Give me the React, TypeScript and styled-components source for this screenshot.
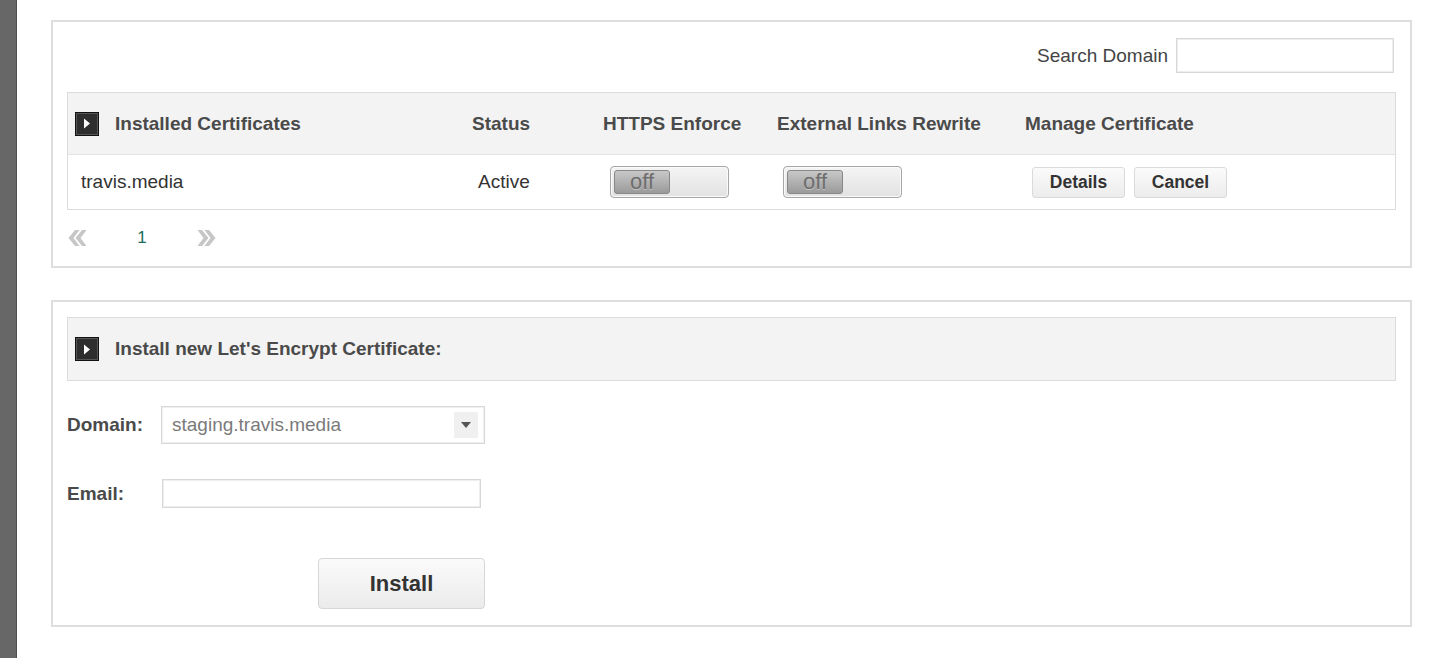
import React from "react";
import styled, { createGlobalStyle } from "styled-components";

const Global = createGlobalStyle`
  html, body { margin: 0; padding: 0; background: #fff; }
  body { font-family: "Liberation Sans", Arial, Helvetica, sans-serif; color: #333; }
  * { box-sizing: border-box; }
`;

const Page = styled.div`
  display: flex;
  min-height: 658px;
  width: 1443px;
`;

const Sidebar = styled.div`
  width: 17px;
  flex: none;
  background: #676767;
  border-right: 1px solid #505050;
`;

const Main = styled.div`
  padding: 20px 0 0 34px;
  width: 1395px;
  display: flex;
  flex-direction: column;
  gap: 32px;
`;

const Panel = styled.section`
  width: 1361px;
  border: 2px solid #dedede;
  padding: 0 14px;
  display: flex;
  flex-direction: column;
`;

const SearchRow = styled.div`
  display: flex;
  justify-content: flex-end;
  align-items: flex-start;
  gap: 8px;
  padding: 16px 2px 0 0;
  height: 70px;
`;

const SearchLabel = styled.label`
  font-size: 19px;
  color: #444;
  line-height: 35px;
`;

const TextInput = styled.input<{ $w: number; $h: number }>`
  width: ${(p) => p.$w}px;
  height: ${(p) => p.$h}px;
  border: 1px solid #d8d8d8;
  box-shadow: inset 0 0 0 1px #eee;
  background: #fff;
  outline: none;
`;

const Table = styled.div`
  border: 1px solid #dcdcdc;
  display: grid;
  grid-template-columns: 392px 131px 174px 248px 1fr;
`;

const HeadCell = styled.div<{ $pad: number }>`
  background: #f3f3f3;
  height: 62px;
  border-bottom: 1px solid #e2e2e2;
  display: flex;
  align-items: center;
  gap: 16px;
  padding-left: ${(p) => p.$pad}px;
  font-size: 19px;
  font-weight: bold;
  color: #4a4a4a;
  white-space: nowrap;
`;

const Cell = styled.div<{ $pad: number }>`
  height: 54px;
  display: flex;
  align-items: center;
  gap: 9px;
  padding-left: ${(p) => p.$pad}px;
  font-size: 19px;
  color: #333;
  white-space: nowrap;
`;

const ToggleBox = styled.span`
  width: 24px;
  height: 24px;
  flex: none;
  background: #2e2e2e;
  border: 1px solid #111;
  box-shadow: inset 0 0 0 1px #555;
  display: inline-flex;
  align-items: center;
  justify-content: center;
`;

const Switch = styled.div`
  width: 119px;
  height: 32px;
  border: 1px solid #a6a6a6;
  border-radius: 4px;
  background: linear-gradient(#f4f4f4, #e2e2e2);
  box-shadow: inset 0 0 0 1px #fafafa;
  padding: 3px;
  display: flex;
`;

const Knob = styled.span`
  width: 56px;
  height: 24px;
  border: 1px solid #888;
  border-radius: 3px;
  background: linear-gradient(#c8c8c8, #9a9a9a);
  color: #6e6e6e;
  font-size: 22px;
  line-height: 21px;
  text-align: center;
  text-shadow: 0 1px 0 #c4c4c4;
`;

const SmallButton = styled.button`
  width: 93px;
  height: 31px;
  border: 1px solid #dadada;
  border-radius: 3px;
  background: linear-gradient(#fbfbfb, #ececec);
  font-family: inherit;
  font-weight: bold;
  font-size: 17.5px;
  color: #333;
  padding: 0;
`;

const Pager = styled.div`
  height: 56px;
  display: flex;
  align-items: center;
  padding-left: 1px;
`;

const PageNum = styled.span`
  font-size: 17px;
  color: #236b5c;
  width: 110px;
  text-align: center;
`;

const HeaderBar = styled.div`
  margin-top: 15px;
  height: 64px;
  background: #f3f3f3;
  border: 1px solid #dcdcdc;
  display: flex;
  align-items: center;
  gap: 16px;
  padding-left: 7px;
  font-size: 19px;
  font-weight: bold;
  color: #4a4a4a;
`;

const FormRow = styled.div<{ $mt: number }>`
  margin-top: ${(p) => p.$mt}px;
  display: flex;
  align-items: center;
`;

const FieldLabel = styled.label`
  width: 94px;
  font-size: 19px;
  font-weight: bold;
  color: #4a4a4a;
`;

const Select = styled.div`
  width: 324px;
  height: 38px;
  border: 1px solid #d8d8d8;
  box-shadow: inset 0 0 0 1px #f0f0f0;
  display: flex;
  align-items: center;
  justify-content: space-between;
  padding: 0 6px 0 10px;
  font-size: 19px;
  color: #7a7a7a;
`;

const Caret = styled.span`
  width: 24px;
  height: 26px;
  background: #f0f0f0;
  display: flex;
  align-items: center;
  justify-content: center;
`;

const InstallButton = styled.button`
  margin: 50px 0 16px 251px;
  width: 167px;
  height: 51px;
  border: 1px solid #d6d6d6;
  border-radius: 4px;
  background: linear-gradient(#fbfbfb, #ebebeb);
  font-family: inherit;
  font-size: 22px;
  font-weight: bold;
  color: #333;
  padding: 0;
`;

const Play = () => (
  <ToggleBox>
    <svg width="8" height="11" viewBox="0 0 8 11">
      <path d="M1 0.5 L7 5.5 L1 10.5 Z" fill="#fff" />
    </svg>
  </ToggleBox>
);

const Chevrons = ({ dir }: { dir: "left" | "right" }) => (
  <svg
    width="19"
    height="18"
    viewBox="0 0 19 18"
    style={{ transform: dir === "right" ? "scaleX(-1)" : undefined }}
  >
    <path d="M7 1 L0.5 9 L7 17 L11.5 17 L5.5 9 L11.5 1 Z" fill="#c6c6c6" />
    <path d="M14 1 L7.5 9 L14 17 L18.5 17 L12.5 9 L18.5 1 Z" fill="#c6c6c6" />
  </svg>
);

const Toggle = () => (
  <Switch>
    <Knob>off</Knob>
  </Switch>
);

export default function App() {
  return (
    <Page>
      <Global />
      <Sidebar />
      <Main>
        <Panel>
          <SearchRow>
            <SearchLabel>Search Domain</SearchLabel>
            <TextInput $w={218} $h={35} />
          </SearchRow>
          <Table>
            <HeadCell $pad={7}>
              <Play />
              Installed Certificates
            </HeadCell>
            <HeadCell $pad={12}>Status</HeadCell>
            <HeadCell $pad={12}>HTTPS Enforce</HeadCell>
            <HeadCell $pad={12}>External Links Rewrite</HeadCell>
            <HeadCell $pad={12}>Manage Certificate</HeadCell>
            <Cell $pad={13}>travis.media</Cell>
            <Cell $pad={18}>Active</Cell>
            <Cell $pad={19}>
              <Toggle />
            </Cell>
            <Cell $pad={18}>
              <Toggle />
            </Cell>
            <Cell $pad={19}>
              <SmallButton>Details</SmallButton>
              <SmallButton>Cancel</SmallButton>
            </Cell>
          </Table>
          <Pager>
            <Chevrons dir="left" />
            <PageNum>1</PageNum>
            <Chevrons dir="right" />
          </Pager>
        </Panel>
        <Panel>
          <HeaderBar>
            <Play />
            Install new Let's Encrypt Certificate:
          </HeaderBar>
          <FormRow $mt={25}>
            <FieldLabel>Domain:</FieldLabel>
            <Select>
              staging.travis.media
              <Caret>
                <svg width="10" height="6" viewBox="0 0 10 6">
                  <path d="M0 0 L10 0 L5 6 Z" fill="#555" />
                </svg>
              </Caret>
            </Select>
          </FormRow>
          <FormRow $mt={35}>
            <FieldLabel>Email:</FieldLabel>
            <TextInput $w={319} $h={29} style={{ marginLeft: 1 }} />
          </FormRow>
          <FormRow $mt={0}>
            <InstallButton>Install</InstallButton>
          </FormRow>
        </Panel>
      </Main>
    </Page>
  );
}
